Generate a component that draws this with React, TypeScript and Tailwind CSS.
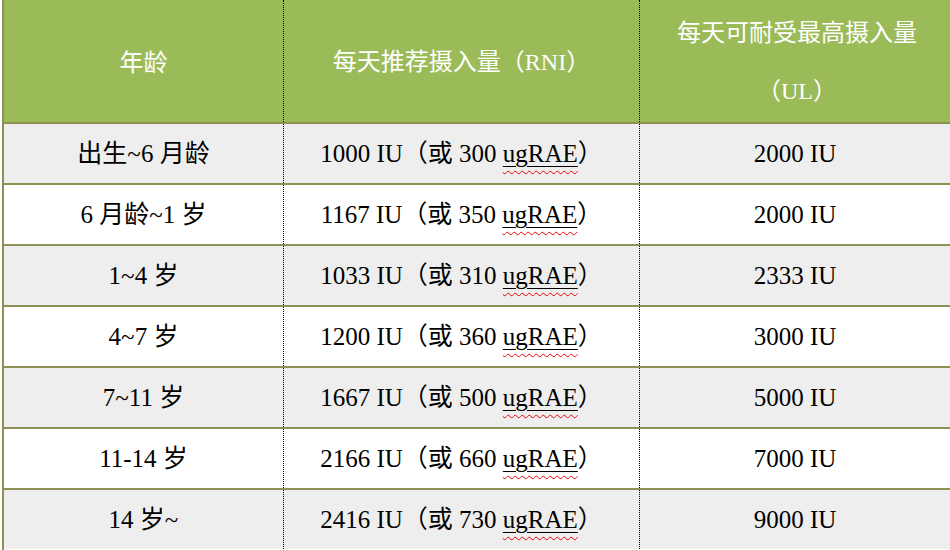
const rows = [
	{ age: "出生~6 月龄", rni: "1000 IU", rae: "300", ul: "2000 IU" },
	{ age: "6 月龄~1 岁", rni: "1167 IU", rae: "350", ul: "2000 IU" },
	{ age: "1~4 岁", rni: "1033 IU", rae: "310", ul: "2333 IU" },
	{ age: "4~7 岁", rni: "1200 IU", rae: "360", ul: "3000 IU" },
	{ age: "7~11 岁", rni: "1667 IU", rae: "500", ul: "5000 IU" },
	{ age: "11-14 岁", rni: "2166 IU", rae: "660", ul: "7000 IU" },
	{ age: "14 岁~", rni: "2416 IU", rae: "730", ul: "9000 IU" },
]

const cols = "grid grid-cols-[280px_356px_1fr]"
const divider = "border-r border-dotted border-black"
const serif = { fontFamily: '"Liberation Serif", "Noto Sans CJK SC", serif' }

export default function App() {
	return (
		<div className="h-[550px] w-[950px] overflow-hidden bg-white pl-[2px]">
			<div className="h-full border-l-2 border-[#8f9152]">
				<div
					className={`${cols} h-[122px] bg-[#9bbb59] text-[24px] text-white`}
					style={{ fontFamily: '"Noto Sans CJK SC", "Noto Sans", sans-serif' }}
				>
					<div className={`flex items-center justify-center ${divider}`}>年龄</div>
					<div className={`flex items-center justify-center ${divider}`}>
						<span>
							每天推荐摄入量（<span style={serif}>RNI</span>）
						</span>
					</div>
					<div className="flex flex-col items-center justify-center gap-[34px] pl-1 leading-none">
						<span>每天可耐受最高摄入量</span>
						<span>
							（<span style={serif}>UL</span>）
						</span>
					</div>
				</div>

				{rows.map((r, i) => (
					<div
						key={r.age}
						className={`${cols} h-[61px] border-t-2 border-[#8f9152] text-[25px] text-black ${
							i % 2 === 0 ? "bg-[#eeeeee]" : "bg-white"
						} first:border-t-0`}
						style={serif}
					>
						<div className={`flex items-center justify-center ${divider}`}>{r.age}</div>
						<div className={`flex items-center justify-center ${divider}`}>
							<span>
								{r.rni}（或 {r.rae}{" "}
								<span className="underline decoration-red-600 decoration-wavy decoration-1 underline-offset-[8px]">
									<span className="underline decoration-black decoration-1 underline-offset-[4px]">
										ugRAE
									</span>
								</span>
								）
							</span>
						</div>
						<div className="flex items-center justify-center">{r.ul}</div>
					</div>
				))}
			</div>
		</div>
	)
}
